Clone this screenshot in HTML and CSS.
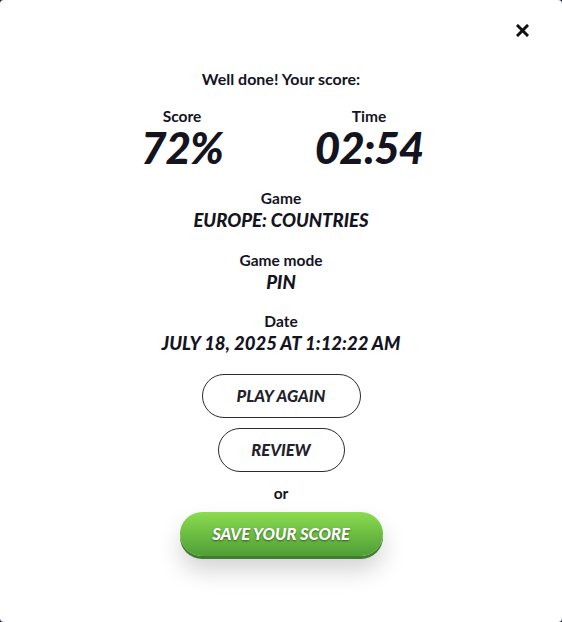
FILE: index.html
```html
<!DOCTYPE html>
<html lang="en">
<head>
    <meta charset="UTF-8">
    <meta name="viewport" content="width=device-width, initial-scale=1.0">
    <title>Results</title>
    <link rel="stylesheet" href="styles.css">
</head>
<body>

<div class="modal">
    <button class="close" aria-label="Close">
        <svg width="13" height="13" viewBox="0 0 13 13">
            <path d="M2 2 L11 11 M11 2 L2 11" stroke="#111" stroke-width="3" stroke-linecap="square"/>
        </svg>
    </button>

    <p class="title">Well done! Your score:</p>

    <div class="stats">
        <div class="stat">
            <span class="label">Score</span>
            <span class="big">72%</span>
        </div>
        <div class="stat">
            <span class="label">Time</span>
            <span class="big">02:54</span>
        </div>
    </div>

    <div class="info">
        <span class="label">Game</span>
        <span class="value">EUROPE: COUNTRIES</span>
    </div>
    <div class="info">
        <span class="label">Game mode</span>
        <span class="value">PIN</span>
    </div>
    <div class="info">
        <span class="label">Date</span>
        <span class="value">JULY 18, 2025 AT 1:12:22 AM</span>
    </div>

    <button class="btn btn-outline play">PLAY AGAIN</button>
    <button class="btn btn-outline review">REVIEW</button>
    <p class="or">or</p>
    <button class="btn btn-save">SAVE YOUR SCORE</button>
</div>

</body>
</html>
```

FILE: styles.css
```css
body {
    margin: 0;
    background-color: #26324a;
    font-family: Lato, "Open Sans", sans-serif;
    color: #14141f;
}
.modal {
    position: relative;
    box-sizing: border-box;
    width: 562px;
    height: 622px;
    background: #fff;
    border-radius: 4px;
    padding-top: 70px;
    display: flex;
    flex-direction: column;
    align-items: center;
}
.close {
    position: absolute;
    top: 24px;
    right: 33px;
    background: none;
    border: none;
    padding: 0;
    cursor: pointer;
    line-height: 0;
}
.title {
    margin: 0;
    font-size: 16px;
    line-height: 18px;
    font-weight: 700;
}
.stats {
    display: grid;
    grid-template-columns: 180px 180px;
    column-gap: 7px;
    margin-top: 19px;
    margin-left: -11px;
}
.stat {
    display: flex;
    flex-direction: column;
    align-items: center;
}
.label {
    font-size: 15.5px;
    line-height: 18px;
    font-weight: 700;
}
.big {
    margin-top: 0;
    font-size: 44px;
    line-height: 44px;
    font-weight: 900;
    font-style: italic;
    letter-spacing: -1px;
}
.info {
    display: flex;
    flex-direction: column;
    align-items: center;
    margin-top: 20px;
}
.info + .info {
    margin-top: 19.5px;
}
.value {
    margin-top: 2px;
    font-size: 18.5px;
    line-height: 22px;
    font-weight: 900;
    font-style: italic;
}
.btn {
    box-sizing: border-box;
    height: 44px;
    border-radius: 22px;
    font-family: inherit;
    font-size: 16.5px;
    font-weight: 900;
    font-style: italic;
    cursor: pointer;
}
.btn-outline {
    background: #fff;
    border: 1px solid #2a2a35;
    color: #22222d;
}
.play {
    width: 159px;
    margin-top: 20px;
}
.review {
    width: 127px;
    margin-top: 10px;
}
.or {
    margin: 12px 0 0;
    font-size: 15.5px;
    line-height: 18px;
    font-weight: 700;
}
.btn-save {
    width: 203px;
    margin-top: 10px;
    border: none;
    color: #fff;
    background: linear-gradient(#8bdc4f, #4f9e37);
    text-shadow: 0 1px 2px rgba(0, 0, 0, 0.5);
    box-shadow: 0 3px 0 #3f7f2b, 0 14px 24px rgba(0, 0, 0, 0.18);
}
```
